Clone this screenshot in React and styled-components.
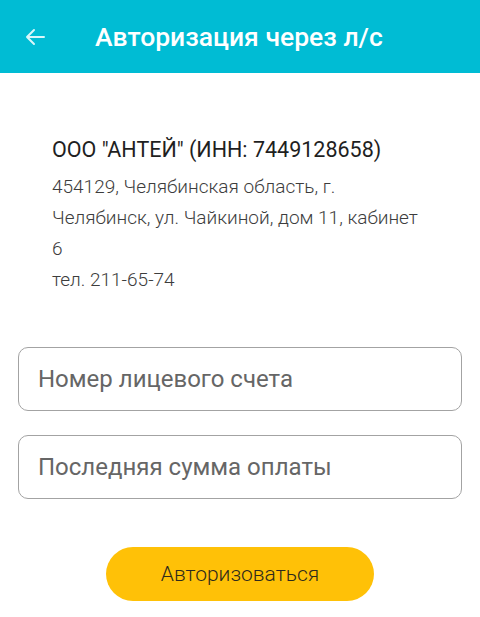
import React from "react";
import styled, { createGlobalStyle } from "styled-components";

const GlobalStyle = createGlobalStyle`
  html, body {
    margin: 0;
    padding: 0;
    background: #ffffff;
    font-family: Roboto, "Noto Sans", sans-serif;
  }
`;

const Page = styled.div`
  width: 480px;
  min-height: 617px;
  display: flex;
  flex-direction: column;
  background: #ffffff;
`;

const Toolbar = styled.header`
  height: 73px;
  background: #00bcd4;
  display: flex;
  align-items: center;
  padding-left: 22px;
  box-sizing: border-box;
`;

const BackButton = styled.button`
  width: 26px;
  height: 26px;
  padding: 0;
  border: none;
  background: none;
  display: flex;
  align-items: center;
  justify-content: center;
  color: #d9f6fa;
`;

const Title = styled.h1`
  margin: 0 0 0 47px;
  font-size: 26.5px;
  font-weight: 500;
  color: #ffffff;
`;

const Content = styled.main`
  display: flex;
  flex-direction: column;
  padding: 64px 18px 0 18px;
`;

const Company = styled.section`
  padding: 0 34px;
  margin-bottom: 52px;
`;

const CompanyName = styled.div`
  font-size: 21.5px;
  color: #1f1f1f;
  line-height: 26px;
  margin-bottom: 8px;
`;

const Line = styled.div`
  font-size: 19px;
  color: #3d3d3d;
  line-height: 31px;
  font-weight: 300;
`;

const Fields = styled.div`
  display: flex;
  flex-direction: column;
  gap: 24px;
`;

const Field = styled.input`
  height: 64px;
  box-sizing: border-box;
  border: 1.5px solid #a3a3a3;
  border-radius: 10px;
  padding: 0 19px;
  font-family: Roboto, "Noto Sans", sans-serif;
  font-size: 24px;
  color: #222;
  background: #fff;
  outline: none;

  &::placeholder {
    color: #666666;
  }
`;

const Submit = styled.button`
  align-self: center;
  margin-top: 48px;
  width: 268px;
  height: 54px;
  border: none;
  border-radius: 27px;
  background: #ffc107;
  font-family: Roboto, "Noto Sans", sans-serif;
  font-size: 21px;
  font-weight: 300;
  color: #2e2a1c;
`;

const ArrowIcon = () => (
  <svg width="24" height="24" viewBox="0 0 24 24" fill="none">
    <path
      d="M21 12H4M11 5l-7 7 7 7"
      stroke="currentColor"
      strokeWidth="2"
      strokeLinecap="round"
      strokeLinejoin="round"
    />
  </svg>
);

export default function App() {
  return (
    <Page>
      <GlobalStyle />
      <Toolbar>
        <BackButton aria-label="Назад">
          <ArrowIcon />
        </BackButton>
        <Title>Авторизация через л/с</Title>
      </Toolbar>
      <Content>
        <Company>
          <CompanyName>ООО "АНТЕЙ" (ИНН: 7449128658)</CompanyName>
          <Line>454129, Челябинская область, г.</Line>
          <Line>Челябинск, ул. Чайкиной, дом 11, кабинет</Line>
          <Line>6</Line>
          <Line>тел. 211-65-74</Line>
        </Company>
        <Fields>
          <Field placeholder="Номер лицевого счета" />
          <Field placeholder="Последняя сумма оплаты" />
        </Fields>
        <Submit>Авторизоваться</Submit>
      </Content>
    </Page>
  );
}
